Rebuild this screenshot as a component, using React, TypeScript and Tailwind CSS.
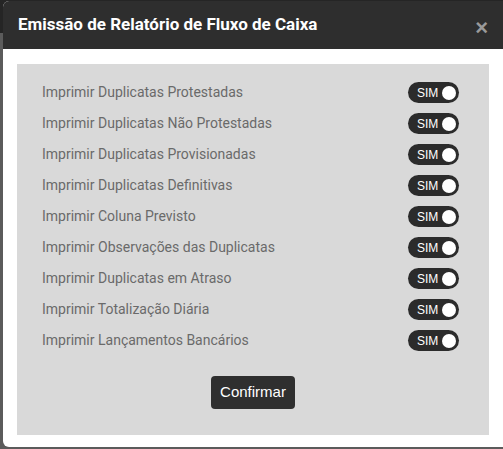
import React from "react";

const items = [
  "Imprimir Duplicatas Protestadas",
  "Imprimir Duplicatas Não Protestadas",
  "Imprimir Duplicatas Provisionadas",
  "Imprimir Duplicatas Definitivas",
  "Imprimir Coluna Previsto",
  "Imprimir Observações das Duplicatas",
  "Imprimir Duplicatas em Atraso",
  "Imprimir Totalização Diária",
  "Imprimir Lançamentos Bancários",
];

function Toggle() {
  return (
    <div className="flex h-[21px] w-[51px] items-center justify-between rounded-full bg-[#2b2b2b] pl-[9px] pr-[3px]">
      <span className="pt-[1px] text-[12px] leading-none text-white" style={{ fontFamily: '"Liberation Sans", Arial, sans-serif' }}>
        SIM
      </span>
      <span className="h-[14px] w-[14px] rounded-full bg-white" />
    </div>
  );
}

export default function App() {
  return (
    <div className="relative h-[449px] w-[503px] overflow-hidden bg-[linear-gradient(to_bottom,#252525_0px,#252525_33px,#5b5b5b_33px)]">
      <div
        className="ml-[3px] mt-[1px] flex h-[446px] w-[510px] flex-col overflow-hidden rounded-[6px] bg-white"
        style={{ fontFamily: "Roboto, 'Noto Sans', sans-serif" }}
      >
        <div className="flex h-[48px] shrink-0 items-center justify-between bg-[#2e2e2e] pl-[15px] pr-[25px]">
          <span className="text-[17px] font-bold text-white">Emissão de Relatório de Fluxo de Caixa</span>
          <span className="mt-[5px] text-[22px] font-bold leading-none text-[#9a9a9a]" style={{ fontFamily: '"Liberation Sans", Arial, sans-serif' }}>
            ×
          </span>
        </div>
        <div className="pl-[14px] pt-[15px]">
          <div className="flex h-[371px] w-[472px] flex-col items-center bg-[#d9d9d9] pt-[13px]">
            <div className="flex w-full flex-col">
              {items.map((t) => (
                <div key={t} className="flex h-[31px] items-center justify-between pl-[25px] pr-[30px]">
                  <span className="text-[14px] text-[#6a6a6a]">{t}</span>
                  <Toggle />
                </div>
              ))}
            </div>
            <button
              className="mt-[20px] h-[33px] w-[84px] rounded-[4px] bg-[#2f2f2f] text-[15px] text-white"
              style={{ fontFamily: '"Liberation Sans", Arial, sans-serif' }}
            >
              Confirmar
            </button>
          </div>
        </div>
      </div>
    </div>
  );
}
